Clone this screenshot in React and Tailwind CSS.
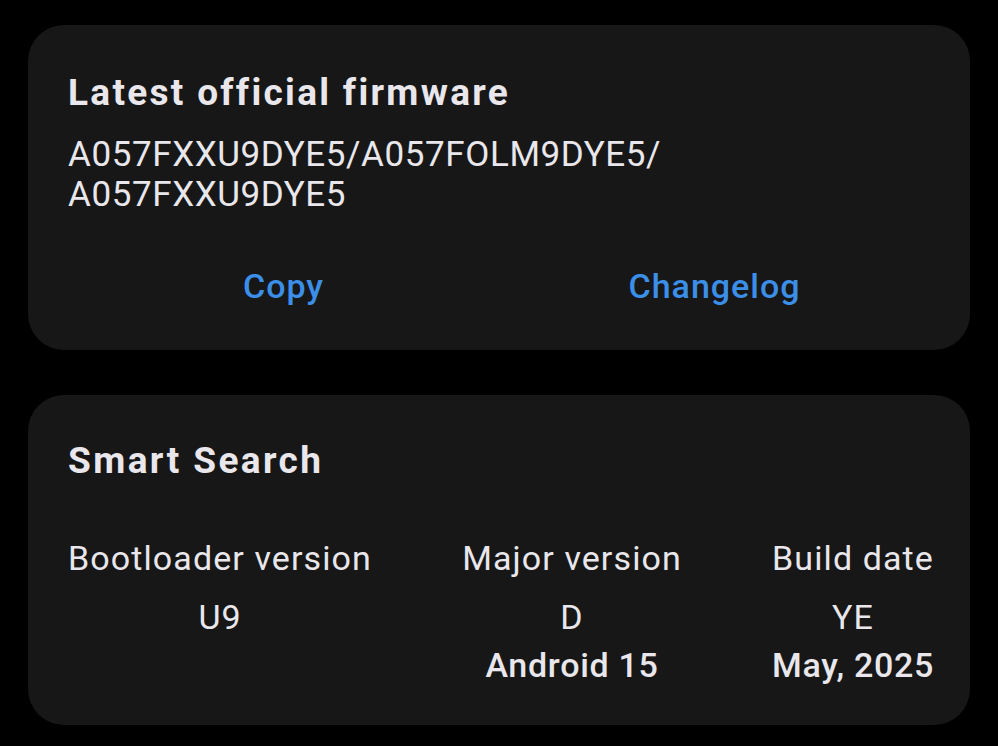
import React from 'react';

const font = { fontFamily: 'Roboto, "Noto Sans", sans-serif' };

const specs = [
  { label: 'Bootloader version', value: 'U9', detail: null },
  { label: 'Major version', value: 'D', detail: 'Android 15' },
  { label: 'Build date', value: 'YE', detail: 'May, 2025' },
];

const FirmwareCard = () => (
  <div className="rounded-[36px] bg-[#171717] px-[40px] pt-[46px] pb-[44px]">
    <div className="text-[37px] leading-[44px] font-bold tracking-[2.3px] text-[#e9e7ec]">
      Latest official firmware
    </div>
    <div className="mt-[20px] text-[35px] leading-[40px] tracking-[0.6px] text-[#e9e7ec]">
      A057FXXU9DYE5/A057FOLM9DYE5/
      <br />
      A057FXXU9DYE5
    </div>
    <div className="mt-[51px] flex">
      <button className="flex-1 text-center text-[34px] leading-[40px] font-medium tracking-[1px] text-[#3b8fe8]">
        Copy
      </button>
      <button className="flex-1 text-center text-[34px] leading-[40px] font-medium tracking-[1px] text-[#3b8fe8]">
        Changelog
      </button>
    </div>
  </div>
);

const SmartSearchCard = () => (
  <div className="rounded-[36px] bg-[#171717] px-[40px] pt-[44px] pb-[36px]">
    <div className="text-[37px] leading-[44px] font-bold tracking-[2.4px] text-[#e9e7ec]">
      Smart Search
    </div>
    <div className="mt-[55px] -mr-[4px] flex justify-between">
      {specs.map((s) => (
        <div key={s.label} className="flex flex-col items-center text-[#e9e7ec]">
          <div className="text-[34px] leading-[40px] tracking-[1.1px] whitespace-nowrap">{s.label}</div>
          <div className="mt-[15px] text-[34px] leading-[48px] tracking-[1px]">{s.value}</div>
          {s.detail && (
            <div className="text-[34px] leading-[48px] font-medium tracking-[0.7px] whitespace-nowrap">
              {s.detail}
            </div>
          )}
        </div>
      ))}
    </div>
  </div>
);

export default function App() {
  return (
    <div className="min-h-[746px] w-[998px] bg-black px-[28px] pt-[25px]" style={font}>
      <FirmwareCard />
      <div className="h-[45px]" />
      <SmartSearchCard />
    </div>
  );
}
